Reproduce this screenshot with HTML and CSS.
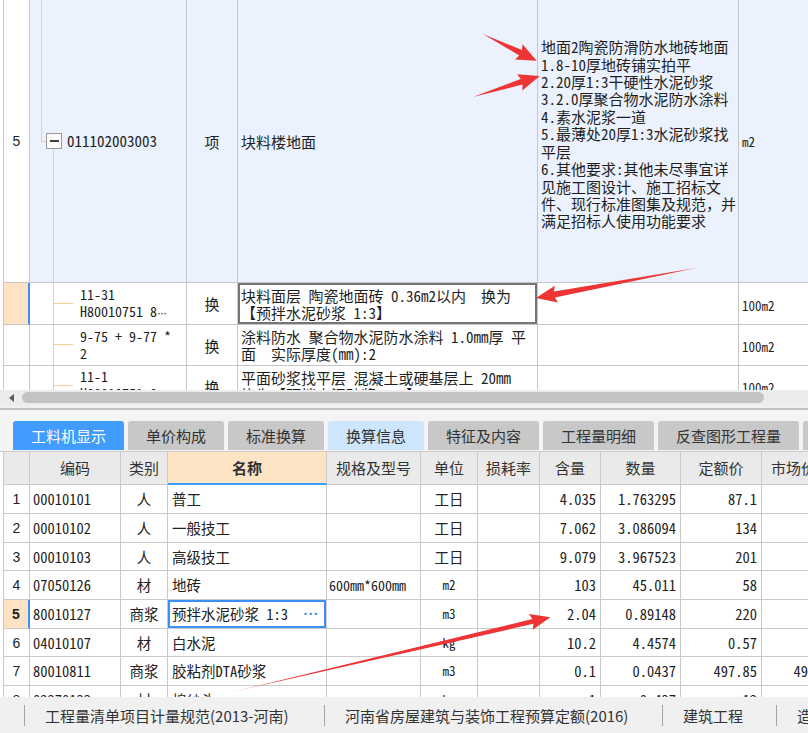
FILE: index.html
```html
<!DOCTYPE html>
<html lang="zh-CN">
<head>
<meta charset="utf-8">
<title>工料机显示</title>
<link rel="stylesheet" href="styles.css">
</head>
<body>
<div class="app">
  <section class="upper">
    <div class="gtop">
      <!-- row 5 -->
      <div class="c num">5</div>
      <div class="c blue root">
        <i class="rt-up"></i>
        <i class="rt-elbow"></i>
        <span class="tbox"></span>
        <i class="rt-down"></i>
        <span class="rt-text">011102003003</span>
      </div>
      <div class="c blue mid">项</div>
      <div class="c blue pad">块料楼地面</div>
      <div class="c blue pad feat">地面2陶瓷防滑防水地砖地面<br>1.8-10厚地砖铺实拍平<br>2.20厚1:3干硬性水泥砂浆<br>3.2.0厚聚合物水泥防水涂料<br>4.素水泥浆一道<br>5.最薄处20厚1:3水泥砂浆找<br>平层<br>6.其他要求:其他未尽事宜详<br>见施工图设计、施工招标文<br>件、现行标准图集及规范，并<br>满足招标人使用功能要求</div>
      <div class="c blue pad unit">m2</div>

      <!-- row 11-31 -->
      <div class="c num cur"></div>
      <div class="c kid"><i class="k-top"></i><i class="k-bot"></i><span class="k-text">11-31<br>H80010751 8<span class="ell">···</span></span></div>
      <div class="c mid">换</div>
      <div class="c pad two sel">块料面层 陶瓷地面砖 0.36m2以内&nbsp;&nbsp;换为<br>【预拌水泥砂浆 1:3】</div>
      <div class="c"></div>
      <div class="c pad unit low">100m2</div>

      <!-- row 9-75 -->
      <div class="c num"></div>
      <div class="c kid"><i class="k-top"></i><i class="k-bot"></i><span class="k-text">9-75 + 9-77 *<br>2</span></div>
      <div class="c mid">换</div>
      <div class="c pad two">涂料防水 聚合物水泥防水涂料 1.0mm厚 平<br>面　实际厚度(mm):2</div>
      <div class="c"></div>
      <div class="c pad unit low">100m2</div>

      <!-- row 11-1 -->
      <div class="c num"></div>
      <div class="c kid"><i class="k-top"></i><i class="k-bot"></i><span class="k-text">11-1<br>H80010751 8<span class="ell">···</span></span></div>
      <div class="c mid">换</div>
      <div class="c pad two">平面砂浆找平层 混凝土或硬基层上 20mm<br>换为【预拌水泥砂浆 1:3】</div>
      <div class="c"></div>
      <div class="c pad unit low">100m2</div>
    </div>
  </section>

  <div class="hscroll"><span class="arr-l"></span><span class="thumb"></span></div>
  <div class="divider"></div>

  <nav class="tabs">
    <span class="tab on">工料机显示</span>
    <span class="tab">单价构成</span>
    <span class="tab">标准换算</span>
    <span class="tab lite">换算信息</span>
    <span class="tab">特征及内容</span>
    <span class="tab">工程量明细</span>
    <span class="tab">反查图形工程量</span>
    <span class="tab">说明信息</span>
  </nav>

  <section class="lower">
    <div class="gbot">
      <div class="h"></div>
      <div class="h">编码</div>
      <div class="h">类别</div>
      <div class="h hname">名称</div>
      <div class="h">规格及型号</div>
      <div class="h">单位</div>
      <div class="h">损耗率</div>
      <div class="h">含量</div>
      <div class="h">数量</div>
      <div class="h">定额价</div>
      <div class="h hl">市场价</div>

      <div class="d n">1</div><div class="d code">00010101</div><div class="d ct">人</div><div class="d nm">普工</div><div class="d"></div><div class="d ct">工日</div><div class="d"></div><div class="d r">4.035</div><div class="d r">1.763295</div><div class="d r">87.1</div><div class="d r"></div>
      <div class="d n">2</div><div class="d code">00010102</div><div class="d ct">人</div><div class="d nm">一般技工</div><div class="d"></div><div class="d ct">工日</div><div class="d"></div><div class="d r">7.062</div><div class="d r">3.086094</div><div class="d r">134</div><div class="d r"></div>
      <div class="d n">3</div><div class="d code">00010103</div><div class="d ct">人</div><div class="d nm">高级技工</div><div class="d"></div><div class="d ct">工日</div><div class="d"></div><div class="d r">9.079</div><div class="d r">3.967523</div><div class="d r">201</div><div class="d r"></div>
      <div class="d n">4</div><div class="d code">07050126</div><div class="d ct">材</div><div class="d nm">地砖</div><div class="d spec">600mm*600mm</div><div class="d ct sm">m2</div><div class="d"></div><div class="d r">103</div><div class="d r">45.011</div><div class="d r">58</div><div class="d r"></div>
      <div class="d n cur">5</div><div class="d code">80010127</div><div class="d ct">商浆</div><div class="d nm pick"><span>预拌水泥砂浆 1:3</span><span class="dots">···</span></div><div class="d"></div><div class="d ct sm">m3</div><div class="d"></div><div class="d r">2.04</div><div class="d r">0.89148</div><div class="d r">220</div><div class="d r"></div>
      <div class="d n">6</div><div class="d code">04010107</div><div class="d ct">材</div><div class="d nm">白水泥</div><div class="d"></div><div class="d ct sm">kg</div><div class="d"></div><div class="d r">10.2</div><div class="d r">4.4574</div><div class="d r">0.57</div><div class="d r"></div>
      <div class="d n">7</div><div class="d code">80010811</div><div class="d ct">商浆</div><div class="d nm">胶粘剂DTA砂浆</div><div class="d"></div><div class="d ct sm">m3</div><div class="d"></div><div class="d r">0.1</div><div class="d r">0.0437</div><div class="d r">497.85</div><div class="d r">497.85</div>
      <div class="d n">8</div><div class="d code">02270133</div><div class="d ct">材</div><div class="d nm">棉纱头</div><div class="d"></div><div class="d ct sm">kg</div><div class="d"></div><div class="d r">1</div><div class="d r">0.437</div><div class="d r">12</div><div class="d r"></div>
    </div>
  </section>

  <footer class="status">
    <span class="sep"></span>
    <span class="si w1">工程量清单项目计量规范(2013-河南)</span>
    <span class="sep"></span>
    <span class="si w2">河南省房屋建筑与装饰工程预算定额(2016)</span>
    <span class="sep"></span>
    <span class="si w3">建筑工程</span>
    <span class="sep"></span>
    <span class="si">造价</span>
  </footer>

  <svg class="marks" width="808" height="733" viewBox="0 0 808 733" xmlns="http://www.w3.org/2000/svg">
    <g fill="#ee3535">
      <g transform="translate(483,34) rotate(26.5)"><polygon points="0,0 42,-3 40,-8.5 60,0 40,8.5 42,3"/></g>
      <g transform="translate(473,97) rotate(-17.4)"><polygon points="0,0 51,-3 49,-8.5 70,0 49,8.5 51,3"/></g>
      <g transform="translate(696,268) rotate(169.4)"><polygon points="0,0 144,-3 142,-8.5 163,0 142,8.5 144,3"/></g>
      <g transform="translate(232,692) rotate(-13.2)"><polygon points="0,0 309,-2.5 307,-8 327,0 307,8 309,2.5"/></g>
    </g>
  </svg>
</div>
</body>
</html>
```

FILE: styles.css
```css
* {
  box-sizing: border-box;
  margin: 0;
  padding: 0;
}

html,
body {
  width: 808px;
  height: 733px;
  overflow: hidden;
  background: #ffffff;
}

body {
  font-family: "Noto Sans Mono CJK SC", "Noto Sans CJK SC", sans-serif;
  color: #1f1f1f;
}

.app {
  position: relative;
  width: 808px;
  height: 733px;
  display: flex;
  flex-direction: column;
  overflow: hidden;
}

/* ---------- upper tree grid ---------- */
.upper {
  flex: none;
  height: 390px;
  overflow: hidden;
}

.gtop {
  display: grid;
  grid-template-columns: 26px 157px 51px 300px 201px 120px;
  grid-template-rows: 283px 42px 41px 41px;
  width: max-content;
  margin-left: 3px;
  border-left: 1px solid #c9c9c9;
  font-size: 15px;
  line-height: 17px;
}

.c {
  display: flex;
  align-items: center;
  border-right: 1px solid #c6c6c6;
  border-bottom: 1px solid #c6c6c6;
  white-space: nowrap;
  overflow: hidden;
  background: #ffffff;
}

.c.blue {
  background: #ebf2fd;
}

.c.pad {
  padding-left: 3px;
}

.c.mid {
  justify-content: center;
}

.c.num {
  justify-content: center;
  font-family: "Liberation Sans", sans-serif;
  font-size: 14px;
  color: #222;
}

.c.num.cur {
  background: #fde3c3;
  border-right: 2px solid #3d8ff5;
}

.c.feat {
  line-height: 17.4px;
  padding-bottom: 14px;
}

.c.two {
  line-height: 17px;
}

.c.unit {
  font-size: 13px;
}

.c.unit.low {
  padding-top: 3px;
}

.c.sel {
  box-shadow: inset 0 0 0 2px #767676;
}

.ell {
  font-family: "Liberation Sans", sans-serif;
  font-size: 12px;
  letter-spacing: -1px;
}

/* root tree node */
.root {
  display: grid;
  grid-template-columns: 11px 5px 16px 1fr;
  grid-template-rows: 1fr 16px 1fr;
  align-items: stretch;
}

.rt-up {
  grid-column: 2;
  grid-row: 1;
  border-left: 1px solid #f6cf98;
}

.rt-elbow {
  grid-column: 2;
  grid-row: 2;
  align-self: start;
  height: 9px;
  border-left: 1px solid #f6cf98;
  border-bottom: 1px solid #f6cf98;
}

.tbox {
  grid-column: 3;
  grid-row: 2;
  display: flex;
  align-items: center;
  justify-content: center;
  border: 1px solid #9b9b9b;
  background: #fbfbfb;
}

.tbox::before {
  content: "";
  display: block;
  width: 9px;
  height: 2px;
  background: #3c3c3c;
}

.rt-down {
  grid-column: 3;
  grid-row: 3;
  margin-left: 7px;
  border-left: 1px solid #f6cf98;
}

.rt-text {
  grid-column: 4;
  grid-row: 2;
  align-self: center;
  padding-left: 5px;
  line-height: 16px;
}

/* child tree nodes */
.kid {
  display: grid;
  grid-template-columns: 23px 20px 1fr;
  grid-template-rows: 1fr 1fr;
  align-items: stretch;
}

.k-top {
  grid-column: 2;
  grid-row: 1;
  border-left: 1px solid #f6cf98;
  border-bottom: 1px solid #f6cf98;
}

.k-bot {
  grid-column: 2;
  grid-row: 2;
  border-left: 1px solid #f6cf98;
}

.k-text {
  grid-column: 3;
  grid-row: 1 / 3;
  align-self: center;
  padding-left: 7px;
  font-size: 14px;
  line-height: 17px;
}

/* ---------- scrollbar & divider ---------- */
.hscroll {
  flex: none;
  height: 15px;
  display: flex;
  align-items: center;
  padding-left: 9px;
  background: #ececec;
}

.arr-l {
  width: 0;
  height: 0;
  border-top: 4px solid transparent;
  border-bottom: 4px solid transparent;
  border-right: 5px solid #5a5a5a;
}

.thumb {
  width: 742px;
  height: 11px;
  margin-left: 8px;
  border-radius: 6px;
  background: #c3c3c3;
}

.divider {
  flex: none;
  height: 5px;
  background: #f0f0f0;
  border-bottom: 2px solid #c1c1c1;
}

/* ---------- tabs ---------- */
.tabs {
  flex: none;
  height: 41px;
  display: flex;
  align-items: flex-end;
  gap: 4px;
  padding: 0 0 1px 13px;
  background: #f4f4f4;
  font-family: "Noto Sans CJK SC", sans-serif;
  font-size: 15px;
  white-space: nowrap;
}

.tab {
  flex: none;
  height: 29px;
  line-height: 29px;
  padding: 0 18px;
  border-radius: 3px 3px 0 0;
  background: #c8c8c8;
  color: #333333;
}

.tab.on {
  background: #409cff;
  color: #ffffff;
}

.tab.lite {
  background: #cde6fe;
}

/* ---------- lower grid ---------- */
.lower {
  flex: none;
  height: 246px;
  overflow: hidden;
  border-top: 1px solid #c9c9c9;
}

.gbot {
  display: grid;
  grid-template-columns: 26px 91px 47px 159px 94px 57px 62px 61px 80px 81px 80px;
  grid-template-rows: 33px 29px 29px 28px 29px 29px 28px 29px 29px;
  width: max-content;
  margin-left: 3px;
  border-left: 1px solid #c9c9c9;
  font-size: 14.5px;
  line-height: 18px;
}

.h,
.d {
  display: flex;
  align-items: center;
  border-right: 1px solid #cacaca;
  border-bottom: 1px solid #cacaca;
  white-space: nowrap;
  overflow: hidden;
}

.h {
  justify-content: center;
  background: #eaeaea;
  font-family: "Noto Sans CJK SC", sans-serif;
  font-size: 15px;
  color: #333333;
}

.h.hname {
  background: #fce4c5;
  font-weight: 700;
  border-bottom: 2px solid #3e9bfa;
}

.h.hl {
  justify-content: flex-start;
  padding-left: 9px;
}

.d {
  background: #ffffff;
  color: #222222;
}

.d.n {
  justify-content: center;
  font-family: "Liberation Sans", sans-serif;
  font-size: 14px;
}

.d.n.cur {
  background: #fde3c3;
  font-weight: 700;
  border-right: 2px solid #3d8ff5;
}

.d.code {
  padding-left: 3px;
}

.d.ct {
  justify-content: center;
}

.d.sm {
  font-size: 13px;
}

.d.nm {
  padding-left: 4px;
}

.d.nm.pick {
  justify-content: space-between;
  padding-right: 7px;
  box-shadow: inset 0 0 0 2px #3d8ff5;
}

.dots {
  font-family: "Liberation Sans", sans-serif;
  font-size: 14px;
  font-weight: 700;
  color: #3d8fe6;
  letter-spacing: 0.5px;
}

.d.spec {
  padding-left: 2px;
  font-size: 14px;
}

.d.r {
  justify-content: flex-end;
  padding-right: 4px;
}

/* ---------- status bar ---------- */
.status {
  flex: none;
  height: 36px;
  display: flex;
  align-items: center;
  padding-left: 24px;
  background: #f0f0f0;
  font-family: "Noto Sans CJK SC", sans-serif;
  font-size: 15px;
  color: #333333;
  white-space: nowrap;
}

.sep {
  flex: none;
  width: 1px;
  height: 21px;
  background: #a4a4a4;
}

.si {
  flex: none;
  padding-left: 20px;
}

.si.w1 {
  width: 299px;
}

.si.w2 {
  width: 337px;
}

.si.w3 {
  width: 113px;
}

/* ---------- annotation arrows ---------- */
.marks {
  position: absolute;
  top: 0;
  left: 0;
  pointer-events: none;
}
```
